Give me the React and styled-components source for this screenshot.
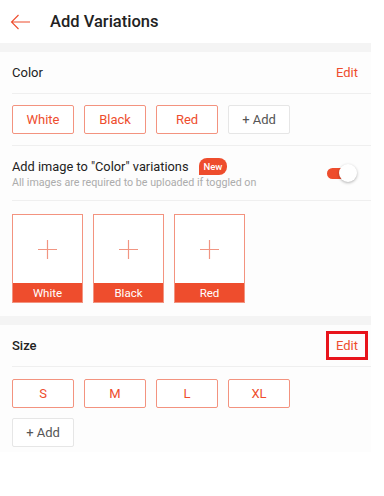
import styled, { createGlobalStyle } from "styled-components";

const orange = "#ee4d2d";

const Global = createGlobalStyle`
  body {
    margin: 0;
    background: #fff;
    font-family: Roboto, "Liberation Sans", sans-serif;
  }
`;

const Page = styled.div`
  width: 371px;
`;

const Header = styled.header`
  height: 43px;
  display: flex;
  align-items: center;
  padding-left: 10px;
  gap: 19px;
  background: #fff;
`;

const Title = styled.h1`
  margin: 0;
  font-size: 16.5px;
  font-weight: 500;
  color: #222;
`;

const Band = styled.div`
  height: 9px;
  background: #f4f4f4;
`;

const Section = styled.section`
  background: #fdfdfd;
`;

const HeadRow = styled.div`
  height: 41px;
  margin-left: 12px;
  padding-right: 13px;
  display: flex;
  align-items: center;
  justify-content: space-between;
  border-bottom: 1px solid #efefef;
`;

const Label = styled.span`
  font-size: 13px;
  color: #222;
  font-weight: ${(p) => (p.$bold ? 500 : 400)};
`;

const EditLink = styled.span`
  font-size: 13px;
  color: ${orange};
  ${(p) =>
    p.$boxed &&
    `
    margin-right: -10px;
    padding: 4px 7px;
    border: 3px solid #e8141c;
  `}
`;

const ChipRow = styled.div`
  display: flex;
  flex-wrap: wrap;
  gap: 10px;
  max-width: 290px;
  padding: ${(p) => p.$pad || "11px 0 11px 12px"};
`;

const Chip = styled.div`
  box-sizing: border-box;
  width: 62px;
  height: 29px;
  display: flex;
  align-items: center;
  justify-content: center;
  font-size: 13px;
  border-radius: 2px;
  color: ${(p) => (p.$add ? "#555" : orange)};
  border: 1px solid ${(p) => (p.$add ? "#e6e6e6" : "#f3937f")};
  background: #fff;
`;

const Divided = styled.div`
  margin-left: 12px;
  border-bottom: 1px solid #efefef;
`;

const ToggleRow = styled.div`
  height: 54px;
  display: flex;
  align-items: center;
  justify-content: space-between;
  padding-right: 14px;
`;

const ToggleText = styled.div`
  display: flex;
  flex-direction: column;
  gap: 1px;
`;

const ToggleTitle = styled.div`
  display: flex;
  align-items: center;
  gap: 10px;
  font-size: 12.8px;
  color: #222;
`;

const NewBadge = styled.span`
  background: ${orange};
  color: #fff;
  font-size: 9.5px;
  font-weight: 500;
  padding: 2px 5px;
  border-radius: 8px 8px 8px 0;
  line-height: 13px;
`;

const Hint = styled.div`
  font-size: 10.7px;
  color: #acacac;
`;

const Switch = styled.div`
  display: flex;
  align-items: center;
  position: relative;
  width: 30px;
  height: 18px;
`;

const Track = styled.div`
  width: 22px;
  height: 11px;
  border-radius: 6px;
  background: ${orange};
`;

const Knob = styled.div`
  position: absolute;
  right: 0;
  top: 0;
  width: 18px;
  height: 18px;
  border-radius: 50%;
  background: #fff;
  box-shadow: 0 1px 3px rgba(0, 0, 0, 0.3);
`;

const ImageRow = styled.div`
  display: flex;
  gap: 10px;
  padding: 13px 12px 13px;
`;

const ImageBox = styled.div`
  box-sizing: border-box;
  width: 71px;
  height: 89px;
  border: 1px solid #f3937f;
  display: flex;
  flex-direction: column;
  background: #fff;
`;

const ImageSlot = styled.div`
  flex: 1;
  display: flex;
  align-items: center;
  justify-content: center;
`;

const ImageLabel = styled.div`
  height: 19px;
  background: ${orange};
  color: #fff;
  font-size: 11.5px;
  display: flex;
  align-items: center;
  justify-content: center;
`;

const Plus = () => (
  <svg width="19" height="19" viewBox="0 0 19 19">
    <path d="M9.5 0v19M0 9.5h19" stroke="#f19582" strokeWidth="1.2" />
  </svg>
);

const BackArrow = () => (
  <svg width="21" height="16" viewBox="0 0 21 16">
    <path
      d="M20 8H1.5M8.5 1L1.5 8l7 7"
      fill="none"
      stroke={orange}
      strokeWidth="1.1"
    />
  </svg>
);

const colors = ["White", "Black", "Red"];
const sizes = ["S", "M", "L", "XL"];

export default function App() {
  return (
    <Page>
      <Global />
      <Header>
        <BackArrow />
        <Title>Add Variations</Title>
      </Header>
      <Band />
      <Section>
        <HeadRow>
          <Label>Color</Label>
          <EditLink>Edit</EditLink>
        </HeadRow>
        <Divided>
          <ChipRow $pad="11px 0 11px 0">
            {colors.map((c) => (
              <Chip key={c}>{c}</Chip>
            ))}
            <Chip $add>+ Add</Chip>
          </ChipRow>
        </Divided>
        <Divided>
          <ToggleRow>
            <ToggleText>
              <ToggleTitle>
                Add image to "Color" variations
                <NewBadge>New</NewBadge>
              </ToggleTitle>
              <Hint>All images are required to be uploaded if toggled on</Hint>
            </ToggleText>
            <Switch>
              <Track />
              <Knob />
            </Switch>
          </ToggleRow>
        </Divided>
        <ImageRow>
          {colors.map((c) => (
            <ImageBox key={c}>
              <ImageSlot>
                <Plus />
              </ImageSlot>
              <ImageLabel>{c}</ImageLabel>
            </ImageBox>
          ))}
        </ImageRow>
      </Section>
      <Band />
      <Section>
        <HeadRow>
          <Label $bold>Size</Label>
          <EditLink $boxed>Edit</EditLink>
        </HeadRow>
        <ChipRow $pad="12px 0 5px 12px">
          {sizes.map((s) => (
            <Chip key={s}>{s}</Chip>
          ))}
          <Chip $add>+ Add</Chip>
        </ChipRow>
      </Section>
    </Page>
  );
}
